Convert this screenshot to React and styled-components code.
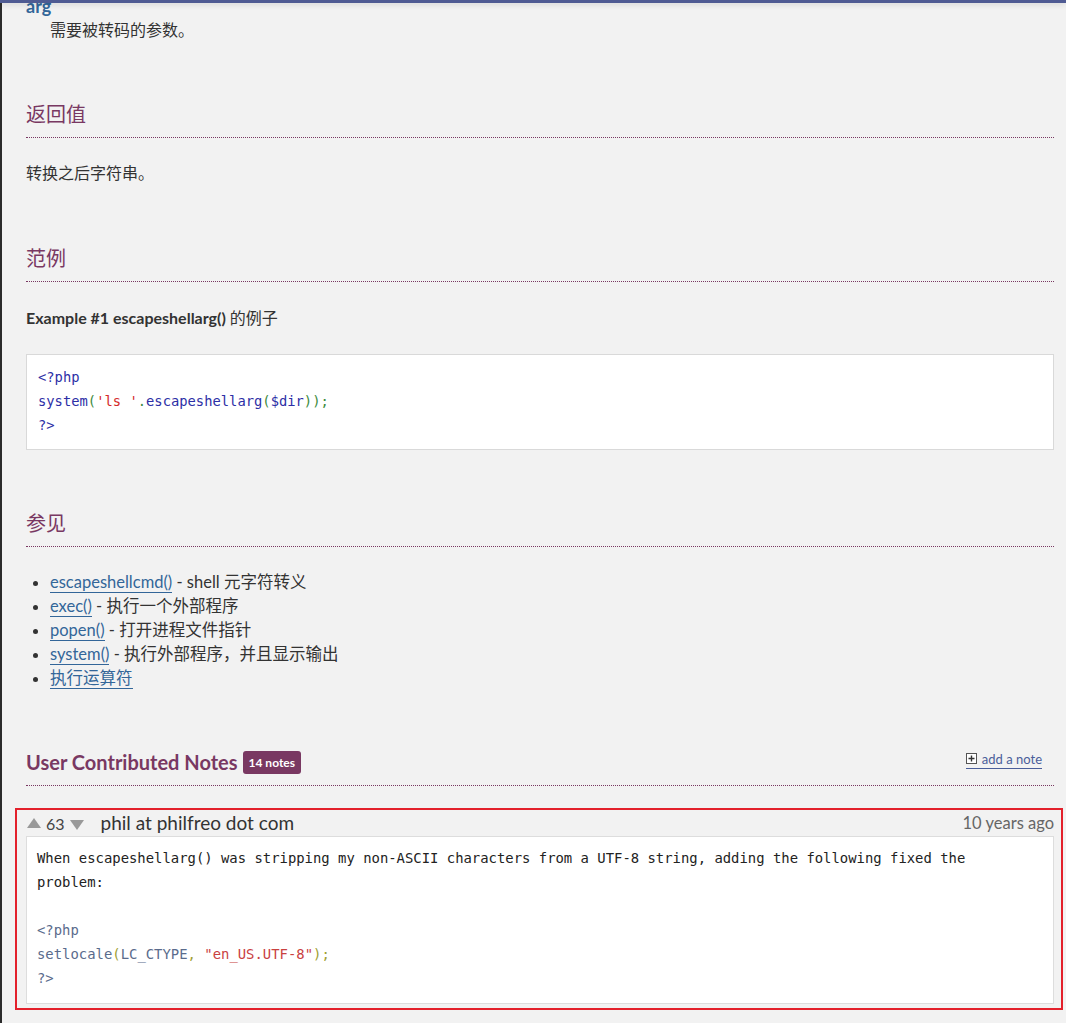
import React from 'react';
import styled, { createGlobalStyle } from 'styled-components';

const GlobalStyle = createGlobalStyle`
  html, body {
    margin: 0;
    padding: 0;
    background: #f2f2f2;
  }
  body {
    font-family: Lato, "Noto Sans CJK SC", sans-serif;
    color: #333;
    font-size: 16px;
    line-height: 24px;
  }
`;

const sans = `Lato, "Noto Sans CJK SC", sans-serif`;
const mono = `"DejaVu Sans Mono", "Liberation Mono", "Noto Sans CJK SC", monospace`;

const TopBar = styled.div`
  position: fixed;
  top: 0;
  left: 0;
  right: 0;
  height: 3px;
  background: #4f5b93;
  box-shadow: 0 1px 6px rgba(0, 0, 0, 0.18);
  z-index: 10;
`;

const Page = styled.div`
  border-left: 2px solid #2b2b2b;
  min-height: 1023px;
  box-sizing: border-box;
  padding: 0 12px 0 24px;
  overflow: hidden;
`;

const Term = styled.dl`
  margin: -6px 0 0;
`;

const TermName = styled.dt`
  font-family: ${sans};
  font-weight: bold;
  font-size: 18px;
  color: #336699;
  line-height: 24px;
`;

const TermDesc = styled.dd`
  margin: 0 0 0 24px;
  line-height: 24px;
`;

const SectionTitle = styled.h3`
  margin: ${(p) => p.$gap || 57}px 0 0;
  padding-bottom: 8px;
  border-bottom: 1px dotted #793862;
  font-family: ${sans};
  font-weight: normal;
  font-size: 20px;
  line-height: 30px;
  color: #793862;
`;

const Para = styled.p`
  margin: 23px 0 0;
`;

const ExampleTitle = styled.p`
  margin: 24px 0 0;
  font-weight: bold;
  font-size: 16px;

  span {
    font-weight: normal;
  }
`;

const CodeBox = styled.div`
  margin-top: 24px;
  background: #fff;
  border: 1px solid #d9d9d9;
  padding: 10px 12px 12px 11px;
  font-family: ${mono};
  font-size: 13.8px;
  line-height: 24px;
  white-space: pre;
`;

const Tok = styled.span`
  color: ${(p) =>
    ({
      def: '#2d2fa6',
      kw: '#3d8b3d',
      str: '#d42a2a',
      ndef: '#5a6b8c',
      nkw: '#a0a032',
      nstr: '#c9413f',
    }[p.$k] || '#333')};
`;

const SeeList = styled.ul`
  margin: 23px 0 0;
  padding-left: 24px;
  list-style: disc;

  li {
    line-height: 24px;
    font-size: 16.5px;
  }
`;

const Link = styled.a`
  color: #336699;
  text-decoration: none;
  border-bottom: 1px solid #336699;
`;

const NotesHead = styled.h2`
  margin: 57px 0 0;
  padding-bottom: 8px;
  border-bottom: 1px dotted #793862;
  display: flex;
  align-items: center;
  font-family: ${sans};
  font-size: 20px;
  line-height: 30px;
  color: #793862;
`;

const Badge = styled.span`
  margin-left: 5px;
  background: #793862;
  color: #fff;
  font-size: 12px;
  font-weight: bold;
  line-height: 23px;
  padding: 0 6px;
  border-radius: 3px;
`;

const AddNote = styled.a`
  margin-left: auto;
  margin-right: 12px;
  margin-top: -6px;
  display: flex;
  align-items: center;
  gap: 5px;
  font-size: 13px;
  font-weight: normal;
  line-height: 18px;
  color: #4a5e9a;
  text-decoration: none;
  border-bottom: 1px solid #4a5e9a;

  svg {
    display: block;
  }
`;

const Note = styled.div`
  margin: 22px -9px 0 -11px;
  border: 2px solid #e3202b;
  padding: 0 7px 4px 9px;
`;

const NoteHeader = styled.div`
  display: flex;
  align-items: center;
  height: 26px;
  padding-left: 1px;
`;

const Votes = styled.div`
  display: flex;
  align-items: center;
  gap: 5px;
  font-size: 16px;
  color: #444;
  margin-top: 2px;
`;

const Arrow = styled.span`
  width: 0;
  height: 0;
  border-left: 7px solid transparent;
  border-right: 7px solid transparent;
  ${(p) =>
    p.$up
      ? 'border-bottom: 10px solid #999; margin-top: -2px;'
      : 'border-top: 10px solid #999; margin-top: 2px;'}
`;

const Author = styled.span`
  margin-left: 17px;
  font-size: 19px;
  color: #333;
`;

const NoteDate = styled.span`
  margin-left: auto;
  font-size: 16.5px;
  color: #666;
`;

const NoteText = styled.div`
  background: #fff;
  border: 1px solid #ddd;
  padding: 9px 28px 13px 10px;
  font-family: ${mono};
  font-size: 13.9px;
  line-height: 24px;
  color: #222;
  white-space: pre-wrap;
`;

export default function App() {
  return (
    <>
      <GlobalStyle />
      <TopBar />
      <Page>
        <Term>
          <TermName>arg</TermName>
          <TermDesc>需要被转码的参数。</TermDesc>
        </Term>

        <SectionTitle>返回值</SectionTitle>
        <Para>转换之后字符串。</Para>

        <SectionTitle $gap={58}>范例</SectionTitle>
        <ExampleTitle>
          Example #1 escapeshellarg() <span>的例子</span>
        </ExampleTitle>
        <CodeBox>
          <Tok $k="def">{'<?php'}</Tok>
          {'\n'}
          <Tok $k="def">system</Tok>
          <Tok $k="kw">(</Tok>
          <Tok $k="str">'ls '</Tok>
          <Tok $k="kw">.</Tok>
          <Tok $k="def">escapeshellarg</Tok>
          <Tok $k="kw">(</Tok>
          <Tok $k="def">$dir</Tok>
          <Tok $k="kw">));</Tok>
          {'\n'}
          <Tok $k="def">{'?>'}</Tok>
        </CodeBox>

        <SectionTitle $gap={58}>参见</SectionTitle>
        <SeeList>
          <li>
            <Link>escapeshellcmd()</Link> - shell 元字符转义
          </li>
          <li>
            <Link>exec()</Link> - 执行一个外部程序
          </li>
          <li>
            <Link>popen()</Link> - 打开进程文件指针
          </li>
          <li>
            <Link>system()</Link> - 执行外部程序，并且显示输出
          </li>
          <li>
            <Link>执行运算符</Link>
          </li>
        </SeeList>

        <NotesHead>
          User Contributed Notes <Badge>14 notes</Badge>
          <AddNote>
            <svg width="11" height="11" viewBox="0 0 11 11">
              <rect x="0.5" y="0.5" width="10" height="10" fill="#fff" stroke="#555" />
              <path d="M5.5 2.5v6M2.5 5.5h6" stroke="#333" strokeWidth="1.4" />
            </svg>
            add a note
          </AddNote>
        </NotesHead>

        <Note>
          <NoteHeader>
            <Votes>
              <Arrow $up />
              63
              <Arrow />
            </Votes>
            <Author>phil at philfreo dot com</Author>
            <NoteDate>10 years ago</NoteDate>
          </NoteHeader>
          <NoteText>
            {'When escapeshellarg() was stripping my non-ASCII characters from a UTF-8 string, adding the following fixed the problem:\n\n'}
            <Tok $k="ndef">{'<?php'}</Tok>
            {'\n'}
            <Tok $k="ndef">setlocale</Tok>
            <Tok $k="nkw">(</Tok>
            <Tok $k="ndef">LC_CTYPE</Tok>
            <Tok $k="nkw">, </Tok>
            <Tok $k="nstr">"en_US.UTF-8"</Tok>
            <Tok $k="nkw">);</Tok>
            {'\n'}
            <Tok $k="ndef">{'?>'}</Tok>
          </NoteText>
        </Note>
      </Page>
    </>
  );
}
